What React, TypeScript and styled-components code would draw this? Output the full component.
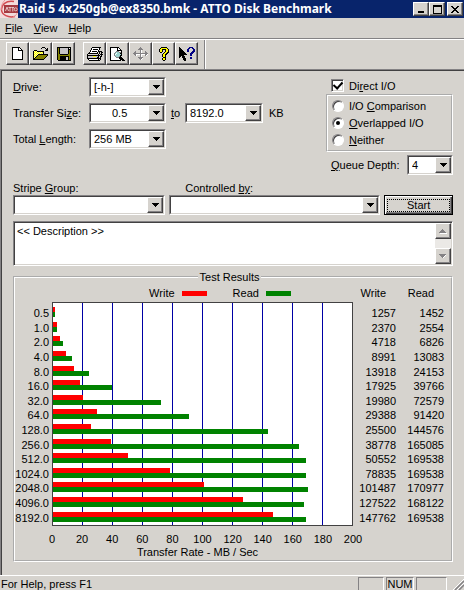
import React, { useState } from "react";
import styled, { createGlobalStyle } from "styled-components";

const face = "#d6d3ce";
const shadow = "#848284";
const dark = "#424142";

const GlobalStyle = createGlobalStyle`
  * { box-sizing: border-box; }
  body {
    margin: 0;
    background: ${face};
    color: #000;
    font: 11px/14px "Liberation Sans", Arial, sans-serif;
  }
  button, select, textarea { font: inherit; color: inherit; border-radius: 0; }
`;

const Window = styled.div`
  display: flex;
  flex-direction: column;
  min-height: 100vh;
`;

const TitleBar = styled.header`
  display: flex;
  align-items: center;
  height: 18px;
  padding-right: 1px;
  background: #08246b;
  color: #fff;
`;

const Title = styled.h1`
  flex: 1;
  margin: 0 0 0 1px;
  font: bold 12px/16px "Noto Sans", "Open Sans", sans-serif;
  white-space: nowrap;
`;

const raised = `
  border: 1px solid;
  border-color: #fff ${dark} ${dark} #fff;
  box-shadow: inset -1px -1px ${shadow};
  background: ${face};
`;

const CaptionButton = styled.button<{ $apart?: boolean }>`
  ${raised}
  display: grid;
  place-items: center;
  width: 16px;
  height: 14px;
  padding: 0;
  margin-left: ${(p) => (p.$apart ? "2px" : "0")};
`;

const MenuBar = styled.nav`
  display: flex;
  gap: 11px;
  padding: 3px 5px;
  height: 21px;
  border-bottom: 1px solid ${shadow};
`;

const MenuItem = styled.button`
  border: 0;
  padding: 0;
  background: none;
`;

const ToolBar = styled.div`
  display: flex;
  height: 30px;
  border-top: 1px solid #fff;
  padding-left: 6px;
`;

const ToolGroup = styled.div`
  display: flex;
  margin-right: 8px;
  padding-top: 2px;
`;

const ToolEnd = styled.div`
  margin-left: -2px;
  width: 2px;
  border-left: 1px solid ${shadow};
  border-right: 1px solid #fff;
`;

const ToolButton = styled.button`
  ${raised}
  display: grid;
  place-items: center;
  width: 23px;
  height: 23px;
  padding: 0;
`;

const Main = styled.main`
  flex: 1;
  border-top: 1px solid ${shadow};
  border-left: 1px solid ${shadow};
  box-shadow: inset 1px 1px ${dark};
  padding: 7px 11px 12px 12px;
`;

const Settings = styled.div`
  display: flex;
  justify-content: space-between;
`;

const Fields = styled.div`
  display: flex;
  flex-direction: column;
  gap: 6px;
`;

const FieldRow = styled.div`
  display: flex;
  align-items: center;
`;

const FieldLabel = styled.label`
  width: 76px;
  white-space: nowrap;
`;

const Joiner = styled.label`
  width: 19px;
  text-align: center;
`;

const Unit = styled.span`
  margin-left: 6px;
`;

const ComboFrame = styled.div<{ $width?: number }>`
  display: grid;
  width: ${(p) => (p.$width ? `${p.$width}px` : "100%")};
  height: 20px;
  border: 1px solid;
  border-color: ${shadow} #fff #fff ${shadow};
`;

const ComboSelect = styled.select<{ $indent?: number }>`
  grid-area: 1 / 1;
  appearance: none;
  width: 100%;
  padding: 0 18px 0 ${(p) => p.$indent ?? 3}px;
  border: 1px solid;
  border-color: ${dark} ${face} ${face} ${dark};
  background: #fff;
  outline: 0;
`;

const ComboArrow = styled.span`
  ${raised}
  grid-area: 1 / 1;
  justify-self: end;
  display: grid;
  place-items: center;
  width: 16px;
  margin: 1px;
  pointer-events: none;
`;

const Options = styled.div`
  width: 127px;
`;

const Choice = styled.label`
  display: flex;
  align-items: center;
  gap: 5px;
  height: 17px;
  white-space: nowrap;
`;

const DirectChoice = styled(Choice)`
  padding-left: 5px;
`;

const CheckInput = styled.input`
  appearance: none;
  width: 13px;
  height: 13px;
  margin: 0;
  border: 1px solid;
  border-color: ${shadow} #fff #fff ${shadow};
  box-shadow: inset 1px 1px ${dark}, inset -1px -1px ${face};
  background: #fff;
  display: grid;
  place-items: center;
  &:checked::before {
    content: "";
    width: 4px;
    height: 7px;
    margin-bottom: 2px;
    border: solid #000;
    border-width: 0 2px 2px 0;
    transform: rotate(42deg);
  }
`;

const RadioInput = styled.input`
  appearance: none;
  width: 12px;
  height: 12px;
  margin: 0;
  border: 1px solid;
  border-color: ${shadow} #fff #fff ${shadow};
  border-radius: 50%;
  box-shadow: inset 1px 1px ${dark};
  background: #fff;
  display: grid;
  place-items: center;
  &:checked::before {
    content: "";
    width: 4px;
    height: 4px;
    border-radius: 50%;
    background: #000;
  }
`;

const ModeGroup = styled.fieldset`
  margin: 0;
  padding: 1px 4px 2px;
  border: 2px groove #fff;
`;

const QueueRow = styled(FieldRow)`
  justify-content: space-between;
  padding-left: 5px;
  margin-top: 3px;
`;

const Target = styled.div`
  display: grid;
  grid-template-columns: 153fr 212fr 69fr;
  column-gap: 4px;
  margin-top: 6px;
`;

const TargetLabel = styled.label<{ $indent?: boolean }>`
  padding-left: ${(p) => (p.$indent ? "16px" : "0")};
`;

const StartButton = styled.button`
  grid-column: 3;
  height: 20px;
  padding: 2px;
  border: 1px solid #000;
  box-shadow: inset 1px 1px #fff, inset -1px -1px ${dark}, inset -2px -2px ${shadow};
  background: ${face};
`;

const StartFocus = styled.span`
  display: block;
  border: 1px dotted #000;
  line-height: 11px;
`;

const DescriptionBox = styled.div`
  display: flex;
  height: 45px;
  margin-top: 6px;
  border: 1px solid;
  border-color: ${shadow} #fff #fff ${shadow};
  background: #fff;
  box-shadow: inset 1px 1px ${dark}, inset -1px -1px ${face};
  padding: 1px;
`;

const Description = styled.textarea`
  flex: 1;
  min-width: 0;
  border: 0;
  padding: 1px 2px;
  margin: 0;
  outline: 0;
  resize: none;
  overflow: hidden;
  background: transparent;
`;

const ScrollBar = styled.div`
  display: flex;
  flex-direction: column;
  justify-content: space-between;
  width: 16px;
  background: #ebe9e6;
`;

const ScrollButton = styled.button`
  ${raised}
  display: grid;
  place-items: center;
  width: 16px;
  height: 16px;
  padding: 0;
`;

const Results = styled.fieldset`
  margin: 4px 0 0;
  padding: 2px 7px 1px 0;
  min-width: 0;
  border: 2px groove #fff;
`;

const ResultsLegend = styled.legend`
  margin: 0 auto;
  padding: 0 2px;
`;

const ResultsBody = styled.div`
  display: grid;
  grid-template-columns: 34px minmax(0, 1fr) 88px;
  column-gap: 3px;
`;

const rowsGrid = `
  display: grid;
  grid-template-rows: repeat(15, 1fr);
  height: 219px;
`;

const SizeLabels = styled.div`
  ${rowsGrid}
  margin-top: 20px;
  justify-items: end;
  align-items: center;
`;

const ChartKey = styled.div`
  display: flex;
  align-items: center;
  justify-content: center;
  height: 14px;
  margin-bottom: 2px;
  padding-left: 35px;
`;

const KeyItem = styled.span<{ $color: string }>`
  display: flex;
  align-items: center;
  gap: 7px;
  margin: 0 13px;
  &::after {
    content: "";
    width: 25px;
    height: 5px;
    background: ${(p) => p.$color};
  }
`;

const Plot = styled.div`
  display: grid;
  border: 1px solid ${dark};
  border-right: 0;
  background: #fff;
`;

const GridLines = styled.div`
  grid-area: 1 / 1;
  display: grid;
  grid-template-columns: repeat(10, 1fr);
`;

const GridColumn = styled.div`
  border-right: 1px solid #0000a5;
  &:last-child { border-color: ${dark}; }
`;

const Bars = styled.div`
  ${rowsGrid}
  grid-area: 1 / 1;
  margin: 2px 2px 1px 0;
  align-items: center;
`;

const Bar = styled.div<{ $color: string }>`
  height: 5px;
  background: ${(p) => p.$color};
`;

const AxisTicks = styled.div`
  display: grid;
  grid-template-columns: repeat(11, 1fr);
  margin: 6px -15px 0;
  text-align: center;
`;

const AxisTitle = styled.div`
  margin-top: -1px;
  padding-right: 10px;
  text-align: center;
`;

const Rates = styled.table`
  display: block;
  margin-left: -3px;
  thead { display: block; padding-bottom: 6px; }
  tbody { ${rowsGrid} }
  tr {
    display: grid;
    grid-template-columns: 43px 1fr;
    align-items: center;
  }
  th, td { padding: 0; font-weight: normal; text-align: right; }
  th { padding-right: 10px; }
`;

const StatusBar = styled.footer`
  display: flex;
  height: 15px;
  padding-left: 1px;
  border-top: 1px solid #fff;
  overflow: hidden;
  line-height: 12px;
`;

const StatusText = styled.span`
  flex: 1;
  padding-top: 2px;
`;

const StatusPane = styled.span<{ $width: number }>`
  width: ${(p) => p.$width}px;
  margin: 1px 2px 0 0;
  border: 1px solid;
  border-color: ${shadow} #fff transparent ${shadow};
  border-bottom: 0;
  text-align: center;
`;

const palette: Record<string, string> = {
  k: "#000", w: "#fff", y: "#ffff00", o: "#848200", g: "#848284",
  l: "#c6c3c6", b: "#000084", c: "#9cd3ce", p: "#ffffa0",
};

function PixelIcon({ rows }: { rows: string[] }) {
  const width = Math.max(...rows.map((r) => r.length));
  return (
    <svg width={width} height={rows.length} shapeRendering="crispEdges" aria-hidden="true">
      {rows.flatMap((row, y) =>
        [...row].map((ch, x) =>
          palette[ch] ? <rect key={`${x}-${y}`} x={x} y={y} width="1" height="1" fill={palette[ch]} /> : null
        )
      )}
    </svg>
  );
}

const glyphs = {
  down: ["kkkkkkk", ".kkkkk.", "..kkk..", "...k..."],
  grayDown: ["ggggggg.", ".gggggw.", "..gggw..", "...gw..."],
  grayUp: ["...g....", "..ggg...", ".ggggg..", "ggggggg.", ".wwwwwww"],
  minimize: [".......", ".......", ".......", ".......", ".......", "kkkkkk.", "kkkkkk."],
  maximize: ["kkkkkkkkk", "kkkkkkkkk", "k.......k", "k.......k", "k.......k", "k.......k", "k.......k", "k.......k", "kkkkkkkkk"],
  close: ["kk....kk", ".kk..kk.", "..kkkk..", "...kk...", "..kkkk..", ".kk..kk.", "kk....kk"],
  page: [
    "kkkkkkkk...", "kwwwwwkwk..", "kwwwwwkwwk.", "kwwwwwkkkkk", "kwwwwwwwwwk", "kwwwwwwwwwk", "kwwwwwwwwwk",
    "kwwwwwwwwwk", "kwwwwwwwwwk", "kwwwwwwwwwk", "kwwwwwwwwwk", "kwwwwwwwwwk", "kkkkkkkkkkk",
  ],
  open: [
    ".........kkk...", "........k...k.k", ".............kk", ".kkk........kkk", "kpypkkkkkkk....", "kypypypypyk....", "kpypypypypk....",
    "kypypkkkkkkkkkk", "kpypkoooooooook", "kypkoooooooook.", "kpkoooooooook..", "kkoooooooook...", "kkkkkkkkkkk....",
  ],
  save: [
    "kkkkkkkkkkkkkk", "kokllllllllkwk", "kokllllllllkkk", "kokllllllllkok", "kokllllllllkok", "kokllllllllkok", "kokllllllllkok",
    "kookkkkkkkkook", "kooooooooooook", "kookkkkkkkkkok", "kookkkkkkllkok", "kookkkkkkllkok", "kookkkkkkllkok", ".kkkkkkkkkkkkk",
  ],
  print: [
    ".....kkkkkkkkk..", "....kwwwwwwwk...", "....kwkkkkkwk...", "...kwwwwwwwk....", "...kwkkkkkwkkkk.", "..kwwwwwwwk.k.kk",
    ".kkkkkkkkkk.k.k.", "k..........k.kkk", "kkkkkkkkkkkkk.k.", "klllllyyyllk.kk.", "klllllllllkk.k..", "kkkkkkkkkkkkkk..", ".kwwwwwwwwwk.k..", "..kkkkkkkkkkk...",
  ],
  preview: [
    "kkkkkkkkk......", "kwwwwwwkwk.....", "kwwwwwwkwwk....", "kwwwwwwkkkkk...", "kwwwwwgggwwk...", "kwwwwgcccggk...", "kwwwgcwccckk...",
    "kwwwgwccccck...", "kwwwgccccckk...", "kwwwwgcccgk....", "kwwwwwgggkkk...", "kwwwwwwwwkkkk..", "kwwwwwwwwwkkkk.", "kkkkkkkkkkk.kkk",
  ],
  move: [
    ".......g.......", "......ggg......", ".....ggggg.....", ".......gw......", "..g....gw...g..", ".gg....gw...gg.", "ggggggggggggggg",
    ".ggwwwwgwwwwggw", "..gw...gw...gw.", ".......gw......", ".....ggggg.....", "......gggw.....", ".......gw......",
  ],
  help: [
    "..kkkkkk..", ".kyyyyyyk.", "kyykkkkyyk", "kyyk..kyyk", "kyyk..kyyk", ".kk..kyykk", "....kyykk.", "...kyykk..",
    "...kyyk...", "...kyyk...", "....kkk...", "...kyyk...", "...kyyk...", "....kk....",
  ],
  contextHelp: [
    "k.........bbbb..", "kk.......bb..bb.", "kkk.....bb....bb", "kkkk....bb....bb", "kkkkk...bb...bbb", "kkkkkk......bbb.", "kkkkkkk....bbb..", "kkkkkkkk...bb...",
    "kkkkk......bb...", "kk.kkk..........", "k..kkk.....bb...", "....kkk....bb...", "....kkk.........", ".....kk.........",
  ],
};

function AppLogo() {
  return (
    <svg width="18" height="18" viewBox="0 0 18 18" aria-hidden="true">
      <rect width="18" height="18" fill="#f3dcdc" />
      <path d="M14 1.500C6 0 1 5 1.500 10S8 18 15 16.500" fill="none" stroke="#d34b50" strokeWidth="1.500" />
      <path d="M5 0C2 3 1 6 2 10M13 17c3-1 4-3 4-5" fill="none" stroke="#e99a9c" />
      <rect x="4" y="5" width="14" height="8" fill="#a63a40" />
      <path d="M5.500 11l1.500-4 1.500 4M8.500 7.500h3M10 7.500v4M11.500 7.500h2.500M12.800 7.500v4" fill="none" stroke="#e5c5c5" />
      <circle cx="15.700" cy="9.300" r="1.500" fill="none" stroke="#e5c5c5" />
    </svg>
  );
}

interface ComboProps {
  id: string;
  options: string[];
  width?: number;
  indent?: number;
}

function Combo({ id, options, width, indent }: ComboProps) {
  return (
    <ComboFrame $width={width}>
      <ComboSelect id={id} $indent={indent}>
        {options.map((o) => <option key={o}>{o}</option>)}
      </ComboSelect>
      <ComboArrow><PixelIcon rows={glyphs.down} /></ComboArrow>
    </ComboFrame>
  );
}

const results: [string, number, number][] = [
  ["0.5", 1257, 1452], ["1.0", 2370, 2554], ["2.0", 4718, 6826], ["4.0", 8991, 13083], ["8.0", 13918, 24153],
  ["16.0", 17925, 39766], ["32.0", 19980, 72579], ["64.0", 29388, 91420], ["128.0", 25500, 144576],
  ["256.0", 38778, 165085], ["512.0", 50552, 169538], ["1024.0", 78835, 169538], ["2048.0", 101487, 170977],
  ["4096.0", 127522, 168122], ["8192.0", 147762, 169538],
];

const axisMax = 200;
const ticks = Array.from({ length: 11 }, (_, i) => i * 20);
const barWidth = (rate: number) => `${(rate / 1000 / axisMax) * 100}%`;

const modes = [
  { id: "comparison", label: <>I/O <u>C</u>omparison</> },
  { id: "overlapped", label: <><u>O</u>verlapped I/O</> },
  { id: "neither", label: <><u>N</u>either</> },
];

const fileTools = [
  { name: "New", rows: glyphs.page }, { name: "Open", rows: glyphs.open }, { name: "Save", rows: glyphs.save },
];
const otherTools = [
  { name: "Print", rows: glyphs.print }, { name: "Print preview", rows: glyphs.preview }, { name: "Move", rows: glyphs.move },
  { name: "About", rows: glyphs.help }, { name: "Context help", rows: glyphs.contextHelp },
];

export default function App() {
  const [direct, setDirect] = useState(true);
  const [mode, setMode] = useState("overlapped");

  return (
    <Window>
      <GlobalStyle />
      <TitleBar>
        <AppLogo />
        <Title>Raid 5 4x250gb@ex8350.bmk - ATTO Disk Benchmark</Title>
        <CaptionButton aria-label="Minimize"><PixelIcon rows={glyphs.minimize} /></CaptionButton>
        <CaptionButton aria-label="Maximize"><PixelIcon rows={glyphs.maximize} /></CaptionButton>
        <CaptionButton aria-label="Close" $apart><PixelIcon rows={glyphs.close} /></CaptionButton>
      </TitleBar>
      <MenuBar>
        <MenuItem><u>F</u>ile</MenuItem>
        <MenuItem><u>V</u>iew</MenuItem>
        <MenuItem><u>H</u>elp</MenuItem>
      </MenuBar>
      <ToolBar role="toolbar">
        {[fileTools, otherTools].map((group, i) => (
          <ToolGroup key={i}>
            {group.map((t) => (
              <ToolButton key={t.name} aria-label={t.name}><PixelIcon rows={t.rows} /></ToolButton>
            ))}
          </ToolGroup>
        ))}
        <ToolEnd />
      </ToolBar>

      <Main>
        <Settings>
          <Fields>
            <FieldRow>
              <FieldLabel htmlFor="drive"><u>D</u>rive:</FieldLabel>
              <Combo id="drive" width={77} options={["[-h-]"]} />
            </FieldRow>
            <FieldRow>
              <FieldLabel htmlFor="from">Transfer Si<u>z</u>e:</FieldLabel>
              <Combo id="from" width={77} indent={21} options={["0.5"]} />
              <Joiner htmlFor="to"><u>t</u>o</Joiner>
              <Combo id="to" width={78} options={["8192.0"]} />
              <Unit>KB</Unit>
            </FieldRow>
            <FieldRow>
              <FieldLabel htmlFor="length">Total <u>L</u>ength:</FieldLabel>
              <Combo id="length" width={77} options={["256 MB"]} />
            </FieldRow>
          </Fields>
          <Options>
            <DirectChoice>
              <CheckInput type="checkbox" checked={direct} onChange={(e) => setDirect(e.target.checked)} />
              <span>Di<u>r</u>ect I/O</span>
            </DirectChoice>
            <ModeGroup aria-label="I/O mode">
              {modes.map((m) => (
                <Choice key={m.id}>
                  <RadioInput type="radio" name="mode" checked={mode === m.id} onChange={() => setMode(m.id)} />
                  <span>{m.label}</span>
                </Choice>
              ))}
            </ModeGroup>
            <QueueRow>
              <label htmlFor="queue"><u>Q</u>ueue Depth:</label>
              <Combo id="queue" width={46} options={["4"]} />
            </QueueRow>
          </Options>
        </Settings>

        <Target>
          <TargetLabel htmlFor="stripe">Stripe <u>G</u>roup:</TargetLabel>
          <TargetLabel htmlFor="controller" $indent>Controlled <u>by</u>:</TargetLabel>
          <span />
          <Combo id="stripe" options={[""]} />
          <Combo id="controller" options={[""]} />
          <StartButton><StartFocus>Start</StartFocus></StartButton>
        </Target>

        <DescriptionBox>
          <Description aria-label="Description" defaultValue="<< Description >>" />
          <ScrollBar>
            <ScrollButton aria-label="Scroll up"><PixelIcon rows={glyphs.grayUp} /></ScrollButton>
            <ScrollButton aria-label="Scroll down"><PixelIcon rows={glyphs.grayDown} /></ScrollButton>
          </ScrollBar>
        </DescriptionBox>

        <Results>
          <ResultsLegend>Test Results</ResultsLegend>
          <ResultsBody>
            <SizeLabels>
              {results.map(([size]) => <span key={size}>{size}</span>)}
            </SizeLabels>
            <div>
              <ChartKey>
                <KeyItem $color="#ff0000">Write</KeyItem>
                <KeyItem $color="#008200">Read</KeyItem>
              </ChartKey>
              <Plot>
                <GridLines>
                  {ticks.slice(1).map((t) => <GridColumn key={t} />)}
                </GridLines>
                <Bars>
                  {results.map(([size, write, read]) => (
                    <div key={size}>
                      <Bar $color="#ff0000" style={{ width: barWidth(write) }} />
                      <Bar $color="#008200" style={{ width: barWidth(read) }} />
                    </div>
                  ))}
                </Bars>
              </Plot>
              <AxisTicks>
                {ticks.map((t) => <span key={t}>{t}</span>)}
              </AxisTicks>
              <AxisTitle>Transfer Rate - MB / Sec</AxisTitle>
            </div>
            <Rates>
              <thead>
                <tr><th scope="col">Write</th><th scope="col">Read</th></tr>
              </thead>
              <tbody>
                {results.map(([size, write, read]) => (
                  <tr key={size}><td>{write}</td><td>{read}</td></tr>
                ))}
              </tbody>
            </Rates>
          </ResultsBody>
        </Results>
      </Main>

      <StatusBar>
        <StatusText>For Help, press F1</StatusText>
        <StatusPane $width={26} />
        <StatusPane $width={28}>NUM</StatusPane>
        <StatusPane $width={31} />
        <svg width="15" height="14" aria-hidden="true">
          <path d="M6 14L15 5M10 14l5-5" stroke={shadow} strokeWidth="1.500" />
          <path d="M4 14L15 3M8 14l7-7" stroke="#fff" />
        </svg>
      </StatusBar>
    </Window>
  );
}
